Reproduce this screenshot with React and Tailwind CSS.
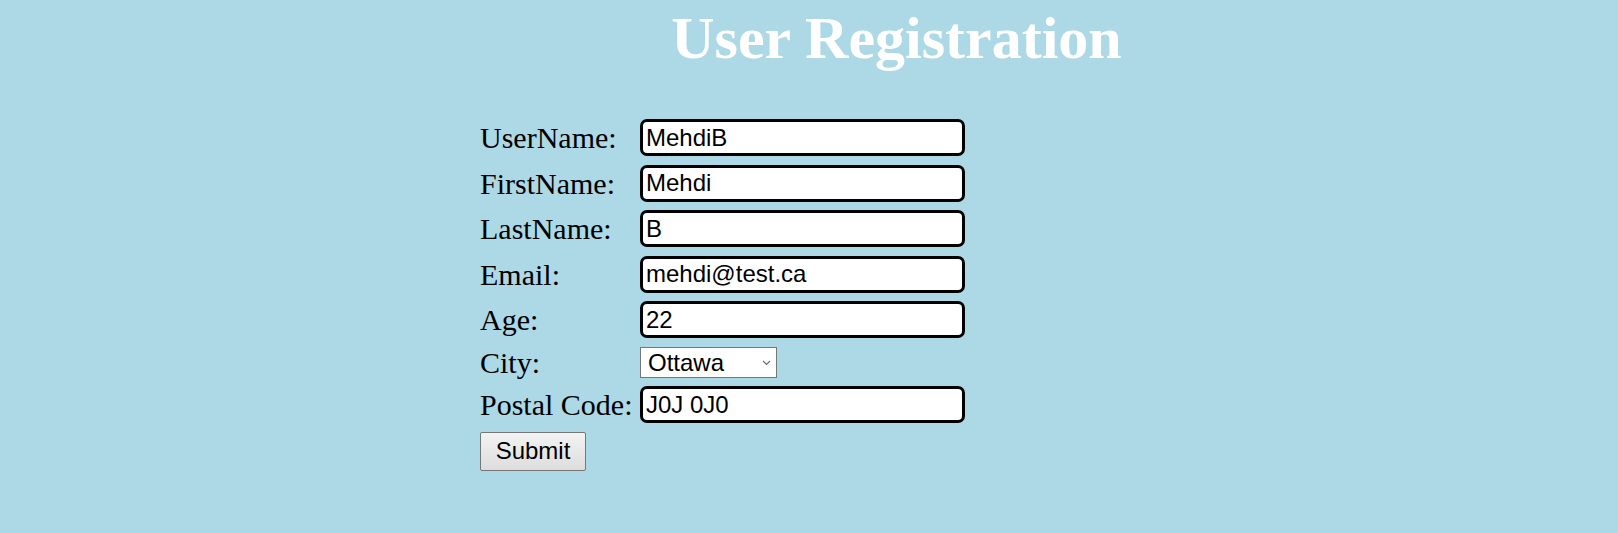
import React from "react";

const rows = [
  { label: "UserName:", value: "MehdiB" },
  { label: "FirstName:", value: "Mehdi" },
  { label: "LastName:", value: "B" },
  { label: "Email:", value: "mehdi@test.ca" },
  { label: "Age:", value: "22" },
];

function Label({ children }) {
  return (
    <label className="text-[30px] leading-[31px] text-black font-['Liberation_Serif','Times_New_Roman',serif] whitespace-nowrap">
      {children}
    </label>
  );
}

function TextInput({ value }) {
  return (
    <input
      type="text"
      defaultValue={value}
      className="w-[325px] h-[37px] border-[3px] border-black rounded-[7px] bg-white px-[3px] text-[24px] text-black font-['Liberation_Sans',Arial,sans-serif] outline-none"
    />
  );
}

export default function App() {
  return (
    <div className="min-h-[533px] w-full bg-[#add8e6] font-['Liberation_Serif','Times_New_Roman',serif]">
      <h1 className="pt-[4px] pl-[175px] text-center text-[60px] leading-[69px] font-bold text-white">
        User Registration
      </h1>
      <form
        className="ml-[480px] mt-[46px] grid grid-cols-[160px_auto] gap-y-[8.5px] items-center justify-start"
        onSubmit={(e) => e.preventDefault()}
      >
        {rows.map((r) => (
          <React.Fragment key={r.label}>
            <Label>{r.label}</Label>
            <TextInput value={r.value} />
          </React.Fragment>
        ))}
        <Label>City:</Label>
        <div className="relative w-[137px] h-[31px]">
          <select
            defaultValue="Ottawa"
            className="appearance-none w-[137px] h-[31px] border border-[#767676] bg-white pl-[7px] pr-[20px] text-[24px] leading-[29px] text-black font-['Liberation_Sans',Arial,sans-serif] rounded-none outline-none"
          >
            <option>Ottawa</option>
            <option>Toronto</option>
            <option>Montreal</option>
            <option>Vancouver</option>
          </select>
          <svg
            className="pointer-events-none absolute right-[6px] top-[13px]"
            width="9"
            height="6"
            viewBox="0 0 9 6"
          >
            <path d="M1 1 L4.5 4.5 L8 1" fill="none" stroke="#6d6d6d" strokeWidth="1.2" />
          </svg>
        </div>
        <Label>Postal Code:</Label>
        <TextInput value="J0J 0J0" />
        <div className="col-span-2">
          <button
            type="submit"
            className="w-[106px] h-[39px] border border-[#767676] rounded-[2px] bg-gradient-to-b from-[#f3f3f3] to-[#dddddd] text-[24px] text-black font-['Liberation_Sans',Arial,sans-serif]"
          >
            Submit
          </button>
        </div>
      </form>
    </div>
  );
}
